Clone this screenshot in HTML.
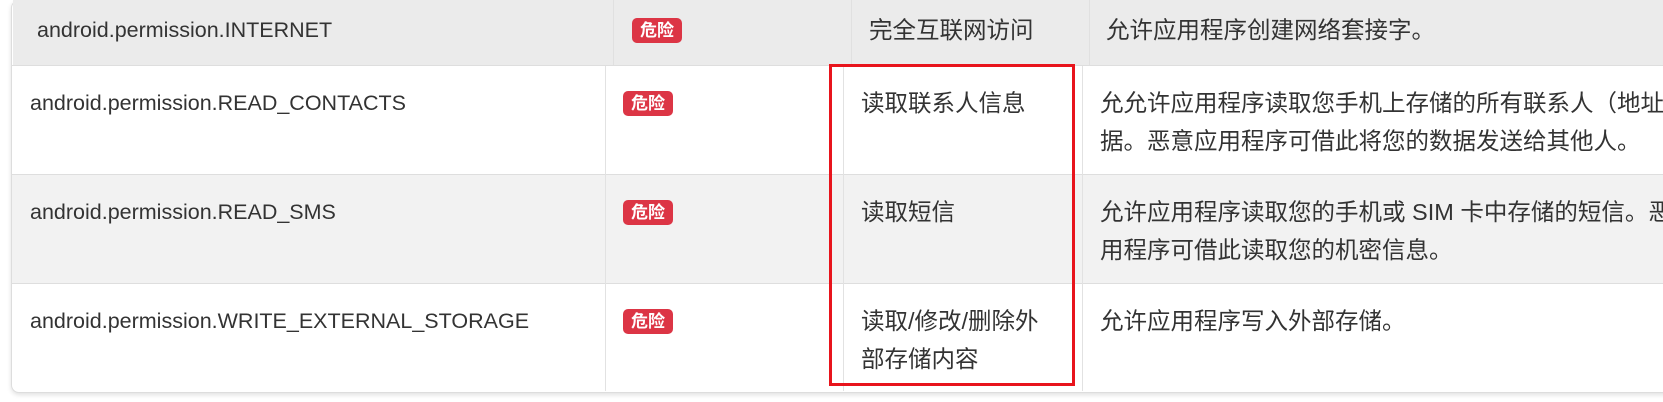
<!DOCTYPE html>
<html><head><meta charset="utf-8"><style>
body{margin:0;width:1663px;height:402px;overflow:hidden;background:#fff;font-family:"Liberation Sans","Noto Sans CJK SC",sans-serif;color:#333;font-size:21.5px;}
.a{position:absolute;white-space:nowrap;line-height:38px;}
.c{font-size:23.5px;}
.r{position:absolute;}
.b{position:absolute;width:50px;height:25px;background:#dc3545;border-radius:5px;color:#fff;font-weight:bold;font-size:17px;line-height:25px;text-align:center;}
.v{position:absolute;width:1px;background:#e2e2e2;}
.h{position:absolute;height:1px;background:#dedede;left:11px;right:0;}
</style></head><body>
<div class="r" style="left:11px;top:0;width:1700px;height:391px;border:1px solid #ddd;border-radius:8px;box-shadow:0 2px 5px rgba(0,0,0,0.12);background:#fff"></div>
<div class="r" style="left:12px;top:174px;width:1660px;height:109px;background:#f2f2f2"></div>
<div class="r" style="left:13px;top:0;width:1660px;height:65px;background:#ebebeb"></div>
<div class="h" style="top:65px"></div><div class="h" style="top:174px"></div><div class="h" style="top:283px"></div>
<div class="v" style="left:613px;top:0;height:65px;background:#e0e0e0"></div>
<div class="v" style="left:851px;top:0;height:65px;background:#e0e0e0"></div>
<div class="v" style="left:1089px;top:0;height:65px;background:#e0e0e0"></div>
<div class="v" style="left:605px;top:66px;height:325px"></div>
<div class="v" style="left:843px;top:66px;height:325px"></div>
<div class="v" style="left:1082px;top:66px;height:325px"></div>

<div class="a" style="left:37px;top:11px">android.permission.INTERNET</div>
<div class="b" style="left:632px;top:18px">危险</div>
<div class="a c" style="left:869px;top:11px">完全互联网访问</div>
<div class="a c" style="left:1106px;top:11px">允许应用程序创建网络套接字。</div>

<div class="a" style="left:30px;top:84px">android.permission.READ_CONTACTS</div>
<div class="b" style="left:623px;top:91px">危险</div>
<div class="a c" style="left:861px;top:84px">读取联系人信息</div>
<div class="a c" style="left:1100px;top:84px">允允许应用程序读取您手机上存储的所有联系人（地址<br>据。恶意应用程序可借此将您的数据发送给其他人。</div>

<div class="a" style="left:30px;top:193px">android.permission.READ_SMS</div>
<div class="b" style="left:623px;top:200px">危险</div>
<div class="a c" style="left:861px;top:193px">读取短信</div>
<div class="a c" style="left:1100px;top:193px">允许应用程序读取您的手机或 SIM 卡中存储的短信。恶<br>用程序可借此读取您的机密信息。</div>

<div class="a" style="left:30px;top:302px">android.permission.WRITE_EXTERNAL_STORAGE</div>
<div class="b" style="left:623px;top:309px">危险</div>
<div class="a c" style="left:861px;top:302px">读取/修改/删除外<br>部存储内容</div>
<div class="a c" style="left:1100px;top:302px">允许应用程序写入外部存储。</div>

<div class="r" style="left:829px;top:64px;width:240px;height:316px;border:3px solid #e8141c"></div>
</body></html>
